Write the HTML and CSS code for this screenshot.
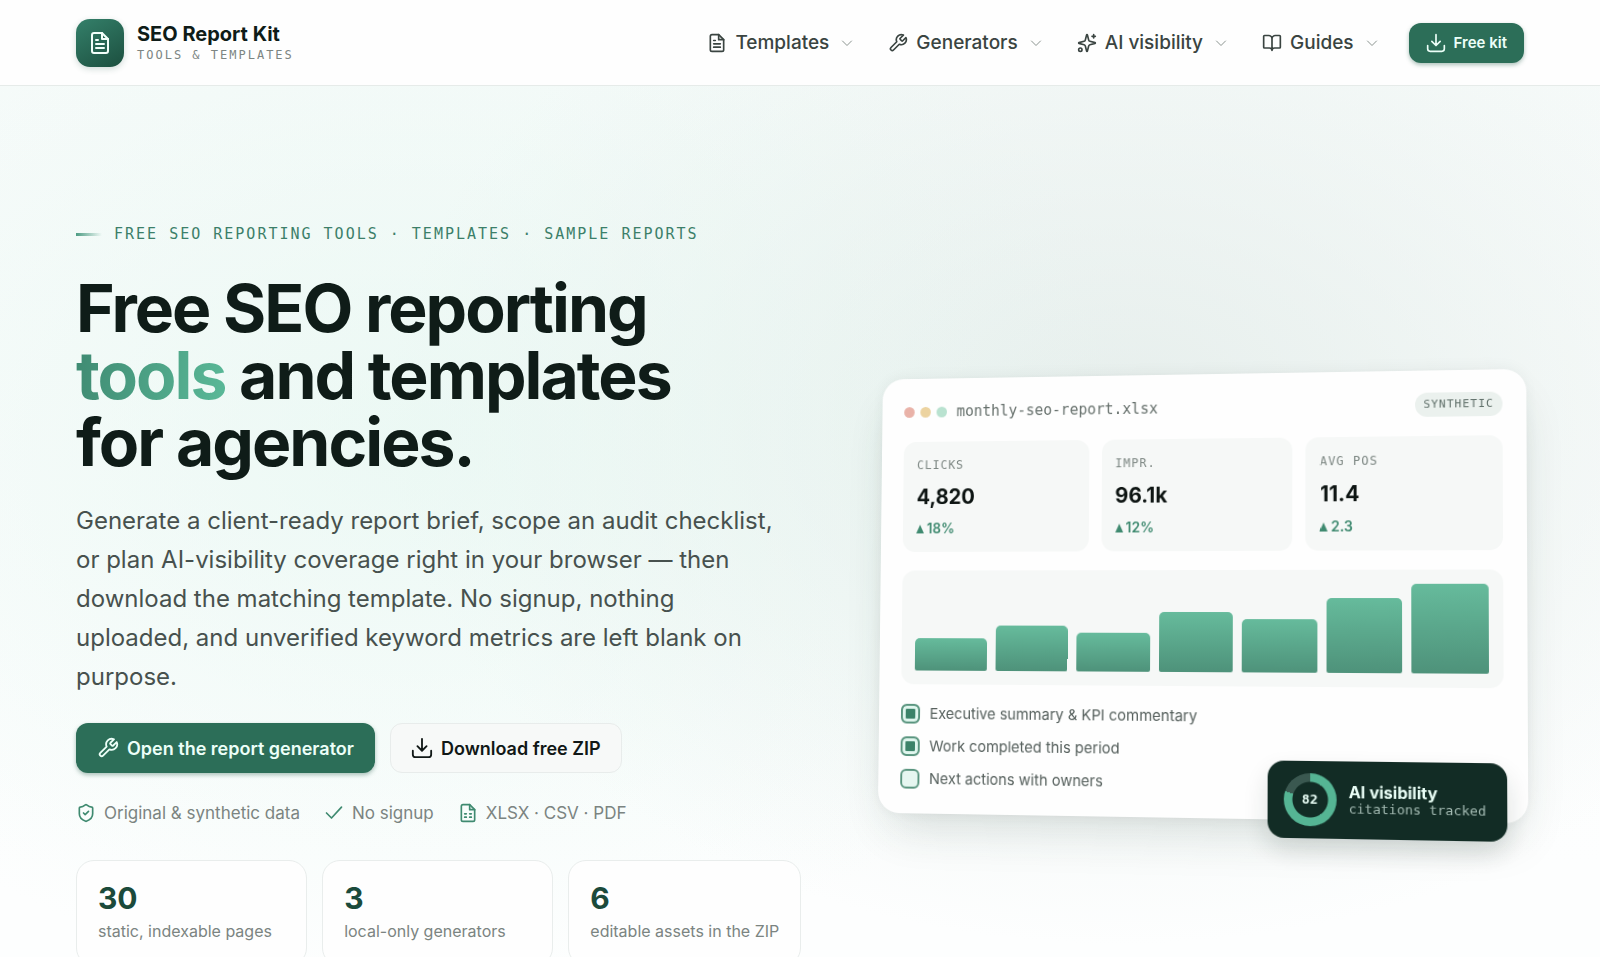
FILE: index.html
```html
<!DOCTYPE html>
<html lang="en">
<head>
<meta charset="utf-8">
<meta name="viewport" content="width=device-width, initial-scale=1">
<title>SEO Report Kit</title>
<link rel="stylesheet" href="styles.css">
</head>
<body>
<svg class="sprite" aria-hidden="true">
  <symbol id="file-text" viewBox="0 0 24 24"><path d="M14 2H6a2 2 0 0 0-2 2v16a2 2 0 0 0 2 2h12a2 2 0 0 0 2-2V8z"/><path d="M14 2v6h6M8 9h2M8 13h8M8 17h8"/></symbol>
  <symbol id="wrench" viewBox="0 0 24 24"><path d="M14.7 6.3a1 1 0 0 0 0 1.4l1.6 1.6a1 1 0 0 0 1.4 0l3.77-3.77a6 6 0 0 1-7.94 7.94l-6.91 6.91a2.12 2.12 0 0 1-3-3l6.91-6.91a6 6 0 0 1 7.94-7.94l-3.76 3.76z"/></symbol>
  <symbol id="sparkles" viewBox="0 0 24 24"><path d="M9.94 15.5A2 2 0 0 0 8.5 14.06l-6.14-1.58a.5.5 0 0 1 0-.96L8.5 9.94A2 2 0 0 0 9.94 8.5l1.58-6.14a.5.5 0 0 1 .96 0L14.06 8.5a2 2 0 0 0 1.44 1.44l6.14 1.58a.5.5 0 0 1 0 .96l-6.14 1.58a2 2 0 0 0-1.44 1.44l-1.58 6.14a.5.5 0 0 1-.96 0zM20 2v4M22 4h-4"/><circle cx="4" cy="20" r="2"/></symbol>
  <symbol id="book" viewBox="0 0 24 24"><path d="M12 6v15M2 4a1 1 0 0 1 1-1h5a4 4 0 0 1 4 4 4 4 0 0 1 4-4h5a1 1 0 0 1 1 1v13a1 1 0 0 1-1 1h-6a3 3 0 0 0-3 3 3 3 0 0 0-3-3H3a1 1 0 0 1-1-1z"/></symbol>
  <symbol id="download" viewBox="0 0 24 24"><path d="M12 2v12M7 10l5 5 5-5M2 15v4a3 3 0 0 0 3 3h14a3 3 0 0 0 3-3v-4"/></symbol>
  <symbol id="chevron" viewBox="0 0 24 24"><path d="M3 8l9 9 9-9"/></symbol>
  <symbol id="shield" viewBox="0 0 24 24"><path d="M20 13c0 5-3.5 7.5-7.66 8.95a1 1 0 0 1-.67-.01C7.5 20.5 4 18 4 13V6a1 1 0 0 1 1-1c2 0 4.5-1.2 6.24-2.72a1.17 1.17 0 0 1 1.52 0C14.51 3.81 17 5 19 5a1 1 0 0 1 1 1z"/><path d="M9 12l2 2 4-4"/></symbol>
  <symbol id="check" viewBox="0 0 24 24"><path d="M21 5L9 18l-6-6"/></symbol>
  <symbol id="sheet" viewBox="0 0 24 24"><path d="M14 2H6a2 2 0 0 0-2 2v16a2 2 0 0 0 2 2h12a2 2 0 0 0 2-2V8z"/><path d="M14 2v6h6M8 13h2M14 13h2M8 17h2M14 17h2"/></symbol>
</svg>

<header class="site-header">
  <div class="container header-row">
    <a class="brand" href="#">
      <span class="brand-mark"><svg class="icon icon-lg"><use href="#file-text"/></svg></span>
      <span class="brand-text"><span class="brand-name">SEO Report Kit</span><span class="brand-sub">TOOLS &amp; TEMPLATES</span></span>
    </a>
    <nav class="nav" aria-label="Main">
      <button class="nav-item" type="button"><svg class="icon"><use href="#file-text"/></svg>Templates<svg class="chevron"><use href="#chevron"/></svg></button>
      <button class="nav-item" type="button"><svg class="icon"><use href="#wrench"/></svg>Generators<svg class="chevron"><use href="#chevron"/></svg></button>
      <button class="nav-item" type="button"><svg class="icon"><use href="#sparkles"/></svg>AI visibility<svg class="chevron"><use href="#chevron"/></svg></button>
      <button class="nav-item" type="button"><svg class="icon"><use href="#book"/></svg>Guides<svg class="chevron"><use href="#chevron"/></svg></button>
      <a class="btn btn-primary btn-small" href="#"><svg class="icon"><use href="#download"/></svg>Free kit</a>
    </nav>
  </div>
</header>

<main class="hero">
  <div class="container hero-grid">
    <div class="intro">
      <p class="eyebrow">FREE SEO REPORTING TOOLS · TEMPLATES · SAMPLE REPORTS</p>
      <h1 class="title">Free SEO reporting<br><span class="accent">tools</span> and templates<br>for agencies.</h1>
      <p class="lead">Generate a client-ready report brief, scope an audit checklist,<br>or plan AI-visibility coverage right in your browser — then<br>download the matching template. No signup, nothing<br>uploaded, and unverified keyword metrics are left blank on<br>purpose.</p>
      <div class="actions">
        <a class="btn btn-primary" href="#"><svg class="icon icon-md"><use href="#wrench"/></svg>Open the report generator</a>
        <a class="btn btn-plain" href="#"><svg class="icon icon-md"><use href="#download"/></svg>Download free ZIP</a>
      </div>
      <ul class="trust">
        <li><svg class="icon"><use href="#shield"/></svg>Original &amp; synthetic data</li>
        <li><svg class="icon"><use href="#check"/></svg>No signup</li>
        <li><svg class="icon"><use href="#sheet"/></svg>XLSX · CSV · PDF</li>
      </ul>
      <div class="stats">
        <div class="stat"><strong>30</strong><span>static, indexable pages</span></div>
        <div class="stat"><strong>3</strong><span>local-only generators</span></div>
        <div class="stat"><strong>6</strong><span>editable assets in the ZIP</span></div>
      </div>
    </div>

    <section class="report" aria-label="Sample report">
      <div class="report-head">
        <span class="dots"><i class="dot dot-red"></i><i class="dot dot-amber"></i><i class="dot dot-green"></i></span>
        <span class="report-file">monthly-seo-report.xlsx</span>
        <span class="tag">SYNTHETIC</span>
      </div>
      <div class="kpis">
        <div class="kpi"><span class="kpi-label">CLICKS</span><strong>4,820</strong><span class="kpi-delta"><i class="up"></i>18%</span></div>
        <div class="kpi"><span class="kpi-label">IMPR.</span><strong>96.1k</strong><span class="kpi-delta"><i class="up"></i>12%</span></div>
        <div class="kpi"><span class="kpi-label">AVG POS</span><strong>11.4</strong><span class="kpi-delta"><i class="up"></i>2.3</span></div>
      </div>
      <div class="chart">
        <div class="bar" style="height:38%"></div>
        <div class="bar" style="height:52%"></div>
        <div class="bar" style="height:44%"></div>
        <div class="bar" style="height:68%"></div>
        <div class="bar" style="height:60%"></div>
        <div class="bar" style="height:84%"></div>
        <div class="bar" style="height:100%"></div>
      </div>
      <div class="tasks">
        <label class="task"><input type="checkbox" checked>Executive summary &amp; KPI commentary</label>
        <label class="task"><input type="checkbox" checked>Work completed this period</label>
        <label class="task"><input type="checkbox">Next actions with owners</label>
      </div>
      <aside class="score">
        <span class="ring">82</span>
        <span class="score-text"><strong>AI visibility</strong><span>citations tracked</span></span>
      </aside>
    </section>
  </div>
</main>
</body>
</html>
```

FILE: styles.css
```css
:root {
  --sans: Inter, "Liberation Sans", sans-serif;
  --mono: "DejaVu Sans Mono", "Liberation Mono", monospace;
  --green: #2c6e58;
  --ink: #0f1c18;
}

* { box-sizing: border-box; }

body {
  margin: 0;
  background: #fdfefe;
  color: var(--ink);
  font-family: var(--sans);
}

a { color: inherit; text-decoration: none; }
p, h1, ul { margin: 0; padding: 0; }
.sprite { display: none; }

.icon, .chevron {
  flex: none;
  width: 20px;
  height: 20px;
  fill: none;
  stroke: currentColor;
  stroke-width: 2;
  stroke-linecap: round;
  stroke-linejoin: round;
}
.icon-md { width: 22px; height: 22px; }
.icon-lg { width: 24px; height: 24px; }
.chevron { width: 12px; height: 12px; margin-left: 4px; color: #8b9490; }

.container { padding: 0 76px; }

.site-header {
  background: #fefefe;
  border-bottom: 1px solid #e6ebe9;
}
.header-row {
  display: flex;
  align-items: center;
  justify-content: space-between;
  height: 85px;
}
.brand { display: flex; align-items: center; gap: 13px; }
.brand-mark {
  display: grid;
  place-items: center;
  width: 48px;
  height: 48px;
  border-radius: 14px;
  background: linear-gradient(150deg, #34806a, #1c4f3f);
  color: #f2fffa;
  box-shadow: 0 2px 6px rgba(28, 79, 63, .2);
}
.brand-text { display: flex; flex-direction: column; }
.brand-name { font-size: 20px; line-height: 24px; font-weight: 700; }
.brand-sub { font: 12px/18px var(--mono); letter-spacing: 2px; color: #7c8582; }

.nav { display: flex; align-items: center; gap: 35px; }
.nav-item {
  display: flex;
  align-items: center;
  gap: 8px;
  padding: 0;
  border: 0;
  background: none;
  color: #3a4441;
  font: 500 19px/28px var(--sans);
}

.btn {
  display: inline-flex;
  align-items: center;
  gap: 8px;
  height: 50px;
  padding: 0 20px;
  border: 1px solid transparent;
  border-radius: 12px;
  font-size: 18px;
  font-weight: 600;
}
.btn-primary {
  background: var(--green);
  color: #ecfff8;
  box-shadow: 0 2px 4px rgba(20, 80, 60, .35);
}
.btn-plain { background: #f7f9f8; border-color: #e8eceb; color: #111816; }
.btn-small { height: 40px; padding: 0 16px; font-size: 15px; margin-left: -4px; }

.hero {
  padding: 137px 0 96px;
  background:
    radial-gradient(ellipse 46% 56% at 26% 36%, rgba(226, 246, 239, .6), rgba(226, 246, 239, 0)),
    radial-gradient(ellipse 46% 54% at 70% 34%, rgba(224, 234, 231, .75), rgba(224, 234, 231, 0)),
    linear-gradient(#f7fbfa, #fdfefe 80%);
}
.hero-grid {
  display: grid;
  grid-template-columns: 10fr 9fr;
  gap: 70px;
  align-items: center;
}

.eyebrow {
  display: flex;
  align-items: center;
  gap: 12px;
  color: #3c7f69;
  font: 15px/22px var(--mono);
  letter-spacing: 2px;
  white-space: nowrap;
}
.eyebrow::before {
  content: "";
  width: 26px;
  height: 3px;
  background: linear-gradient(90deg, #4d9c83, transparent);
}
.title {
  margin-top: 30px;
  font-size: 66px;
  line-height: 67px;
  font-weight: 700;
  letter-spacing: -0.03em;
  white-space: nowrap;
}
.accent {
  background: linear-gradient(100deg, #3f8a72, #5ab998);
  -webkit-background-clip: text;
  background-clip: text;
  color: transparent;
}
.lead {
  margin-top: 25px;
  color: #47514e;
  font-size: 24px;
  line-height: 39px;
  white-space: nowrap;
}
.actions { display: flex; gap: 15px; margin-top: 27px; }
.trust {
  display: flex;
  gap: 24px;
  margin-top: 27px;
  list-style: none;
  color: #7b8481;
  font-size: 17px;
  line-height: 26px;
}
.trust li { display: flex; align-items: center; gap: 8px; }
.trust .icon { color: #3f8a70; }

.stats {
  display: grid;
  grid-template-columns: repeat(3, 1fr);
  gap: 15px;
  margin-top: 34px;
}
.stat {
  display: flex;
  flex-direction: column;
  padding: 19px 21px;
  border: 1px solid #e9edec;
  border-radius: 18px;
  background: #fefefe;
  white-space: nowrap;
}
.stat strong { color: #1b4a3b; font-size: 30px; line-height: 36px; }
.stat span { color: #7b8481; font-size: 16px; line-height: 30px; }

.report {
  position: relative;
  margin-right: 3px;
  padding: 22px 23px 24px;
  border-radius: 22px;
  background: #fefefe;
  box-shadow: 0 24px 48px -12px rgba(30, 60, 50, .16), 0 0 16px rgba(30, 60, 50, .06);
  transform: perspective(1400px) rotateY(-6deg) rotateX(2deg);
}
.report-head { display: flex; align-items: center; gap: 10px; height: 24px; }
.dots { display: flex; gap: 6px; }
.dot { width: 11px; height: 11px; border-radius: 50%; }
.dot-red { background: #e9b2a8; }
.dot-amber { background: #ecd3a0; }
.dot-green { background: #b9e2d0; }
.report-file { color: #66706c; font: 15px/20px var(--mono); }
.tag {
  margin-left: auto;
  padding: 0 8px;
  border-radius: 12px;
  background: #ebf1ee;
  color: #5f6f69;
  font: 11px/24px var(--mono);
  letter-spacing: 1px;
}
.kpis {
  display: grid;
  grid-template-columns: repeat(3, 1fr);
  gap: 13px;
  margin-top: 19px;
}
.kpi {
  display: flex;
  flex-direction: column;
  gap: 6px;
  padding: 14px;
  border-radius: 13px;
  background: #f6f8f7;
}
.kpi-label { color: #7d8783; font: 12px/20px var(--mono); letter-spacing: 1px; }
.kpi strong { color: #0d1412; font-size: 21px; line-height: 33px; }
.kpi-delta {
  display: flex;
  align-items: center;
  gap: 3px;
  color: #3f8a70;
  font-size: 14px;
  line-height: 20px;
  font-weight: 600;
}
.up {
  border: 4px solid transparent;
  border-top: 0;
  border-bottom: 9px solid currentColor;
}
.chart {
  display: flex;
  align-items: flex-end;
  gap: 9px;
  height: 116px;
  margin-top: 19px;
  padding: 14px;
  border-radius: 13px;
  background: #f6f8f7;
}
.bar {
  flex: 1;
  border-radius: 5px 5px 2px 2px;
  background: linear-gradient(#66bb9c, #4e927a);
}
.tasks { display: grid; gap: 11px; margin-top: 19px; }
.task {
  display: flex;
  align-items: center;
  gap: 10px;
  color: #56605d;
  font-size: 15px;
  line-height: 22px;
}
.task input {
  appearance: none;
  width: 20px;
  height: 20px;
  margin: 0;
  border: 2px solid #5a957f;
  border-radius: 6px;
  background: #e6f6f0;
}
.task input:checked {
  background: #3c8369;
  box-shadow: inset 0 0 0 3px #e0f6ee;
}
.score {
  position: absolute;
  right: 20px;
  bottom: -18px;
  display: flex;
  align-items: center;
  gap: 12px;
  padding: 12px 20px 12px 16px;
  border-radius: 16px;
  background: #122c25;
  color: #eafff7;
  box-shadow: 0 12px 24px rgba(18, 44, 37, .14);
}
.ring {
  display: grid;
  place-items: center;
  width: 52px;
  height: 52px;
  border-radius: 50%;
  background:
    radial-gradient(circle, #122c25 17px, transparent 18px),
    conic-gradient(#55b594 80%, #3a5850 0);
  font: 700 13px/16px var(--mono);
}
.score-text { display: flex; flex-direction: column; }
.score-text strong { font-size: 16px; line-height: 18px; }
.score-text span { color: #a3bab2; font: 13px/16px var(--mono); }
```
